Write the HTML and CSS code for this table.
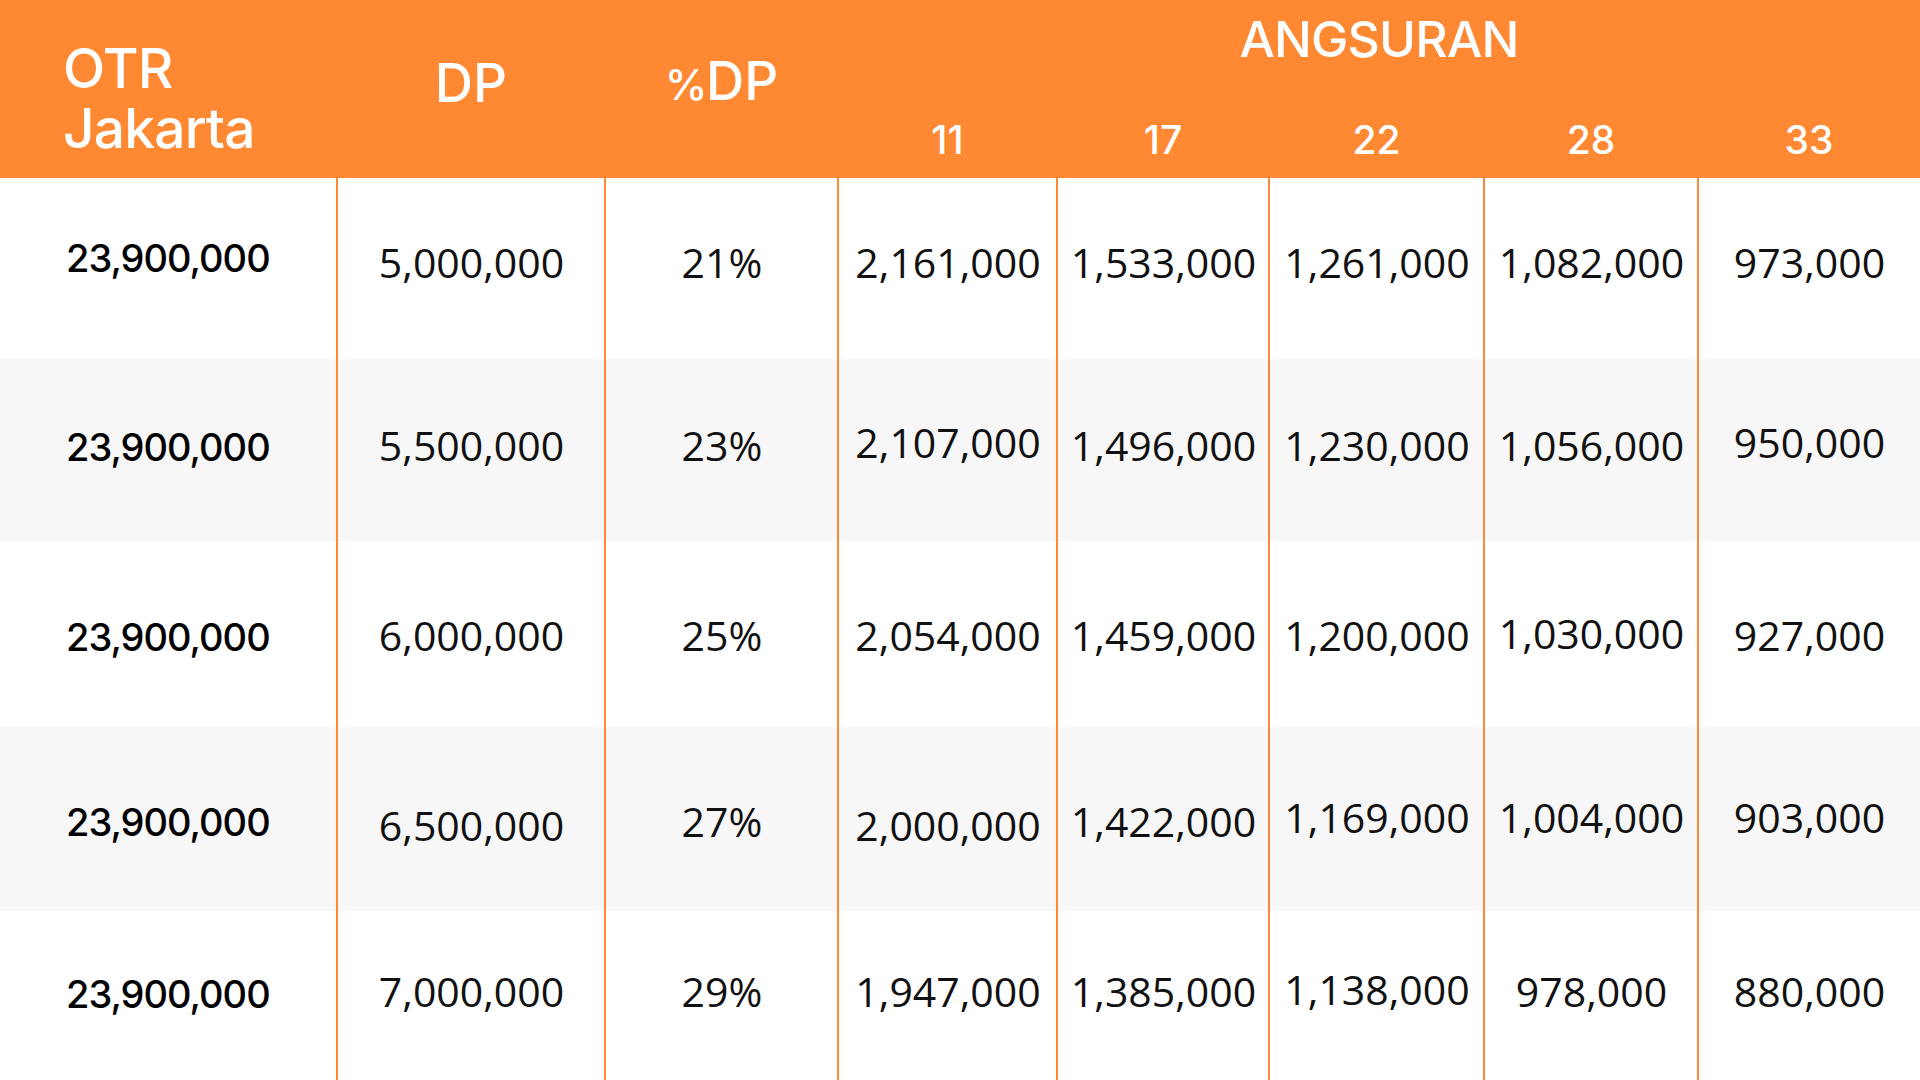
FILE: index.html
```html
<!DOCTYPE html>
<html lang="id">
<head>
<meta charset="utf-8">
<title>Angsuran</title>
<link rel="stylesheet" href="styles.css">
</head>
<body>
<div class="table">
  <div class="head">
    <div class="h-otr">OTR<br>Jakarta</div>
    <div class="h-big h-dp">DP</div>
    <div class="h-big h-pdp"><span class="pct">%</span>DP</div>
    <div class="h-ang">ANGSURAN</div>
    <div class="h-sub">11</div>
    <div class="h-sub">17</div>
    <div class="h-sub">22</div>
    <div class="h-sub">28</div>
    <div class="h-sub">33</div>
  </div>

  <div class="row r1">
    <div class="c c-otr">23,900,000</div>
    <div class="c">5,000,000</div>
    <div class="c">21%</div>
    <div class="c">2,161,000</div>
    <div class="c">1,533,000</div>
    <div class="c">1,261,000</div>
    <div class="c">1,082,000</div>
    <div class="c">973,000</div>
  </div>
  <div class="row r2 alt">
    <div class="c c-otr">23,900,000</div>
    <div class="c">5,500,000</div>
    <div class="c">23%</div>
    <div class="c hi">2,107,000</div>
    <div class="c">1,496,000</div>
    <div class="c">1,230,000</div>
    <div class="c">1,056,000</div>
    <div class="c hi">950,000</div>
  </div>
  <div class="row r3">
    <div class="c c-otr">23,900,000</div>
    <div class="c">6,000,000</div>
    <div class="c">25%</div>
    <div class="c">2,054,000</div>
    <div class="c">1,459,000</div>
    <div class="c">1,200,000</div>
    <div class="c hi">1,030,000</div>
    <div class="c">927,000</div>
  </div>
  <div class="row r4 alt">
    <div class="c c-otr">23,900,000</div>
    <div class="c lo">6,500,000</div>
    <div class="c">27%</div>
    <div class="c lo">2,000,000</div>
    <div class="c">1,422,000</div>
    <div class="c hi">1,169,000</div>
    <div class="c hi">1,004,000</div>
    <div class="c hi">903,000</div>
  </div>
  <div class="row r5">
    <div class="c c-otr">23,900,000</div>
    <div class="c">7,000,000</div>
    <div class="c">29%</div>
    <div class="c">1,947,000</div>
    <div class="c">1,385,000</div>
    <div class="c hi">1,138,000</div>
    <div class="c">978,000</div>
    <div class="c">880,000</div>
  </div>
</div>
</body>
</html>
```

FILE: styles.css
```css
html, body {
  margin: 0;
  padding: 0;
  background: #ffffff;
  overflow: hidden;
}

.table {
  width: 1920px;
  height: 1080px;
  overflow: hidden;
}

.head,
.row {
  display: grid;
  grid-template-columns: 337px 268px 233px 219px 212px 215px 214px 222px;
}

.head {
  height: 178px;
  background: #ff8833;
  color: #ffffff;
  font-family: Inter, "Liberation Sans", sans-serif;
  font-weight: 500;
  grid-template-rows: 100px 78px;
}

.h-otr {
  grid-row: 1 / 3;
  grid-column: 1;
  align-self: center;
  padding-left: 63px;
  padding-top: 18px;
  font-size: 55px;
  line-height: 60px;
  letter-spacing: -0.8px;
}

.h-big {
  grid-row: 1 / 3;
  align-self: center;
  justify-self: center;
  font-size: 53px;
  line-height: 60px;
  padding-bottom: 13px;
}

.h-dp { grid-column: 2; }
.h-pdp { grid-column: 3; }

.pct {
  font-size: 43px;
  letter-spacing: -1.5px;
}

.h-ang {
  grid-row: 1;
  grid-column: 4 / 9;
  justify-self: center;
  align-self: start;
  padding-top: 10px;
  font-size: 50px;
  line-height: 58px;
  letter-spacing: -0.8px;
}

.h-sub {
  grid-row: 2;
  text-align: center;
  font-size: 39px;
  line-height: 46px;
  padding-top: 17px;
}

.row {
  font-family: "Open Sans", "Noto Sans", sans-serif;
  font-size: 41px;
  color: #111111;
  background: #ffffff;
}

.row.alt { background: #f7f7f7; }

.r1 { height: 181px; }
.r2 { height: 182px; }
.r3 { height: 186px; }
.r4 { height: 184px; }
.r5 { height: 182px; }

.c {
  display: flex;
  align-items: center;
  justify-content: center;
  border-left: 2px solid #ff8833;
  box-sizing: border-box;
  margin-left: -1px;
}

.r1 .c { padding-bottom: 14px; }
.r2 .c { padding-bottom: 10px; }
.r2 .c.hi { padding-bottom: 17px; }
.r3 .c { padding-top: 2px; }
.r3 .c.hi { padding-top: 0; padding-bottom: 3px; }
.r4 .c { padding-top: 3px; }
.r4 .c.lo { padding-top: 12px; }
.r4 .c.hi { padding-top: 0; padding-bottom: 5px; }
.r5 .c { padding-bottom: 22px; }
.r5 .c.hi { padding-bottom: 27px; }

.c-otr {
  justify-content: flex-start;
  padding-left: 66px;
  border-left: none;
  margin-left: 0;
  font-family: Inter, "Liberation Sans", sans-serif;
  font-weight: 500;
  font-size: 38px;
  letter-spacing: -1px;
  color: #000000;
}

.r1 .c-otr { padding-bottom: 21px; }
.r2 .c-otr { padding-bottom: 7px; }
.r3 .c-otr { padding-top: 6px; }
.r4 .c-otr { padding-top: 6px; }
.r5 .c-otr { padding-bottom: 16px; }
```
